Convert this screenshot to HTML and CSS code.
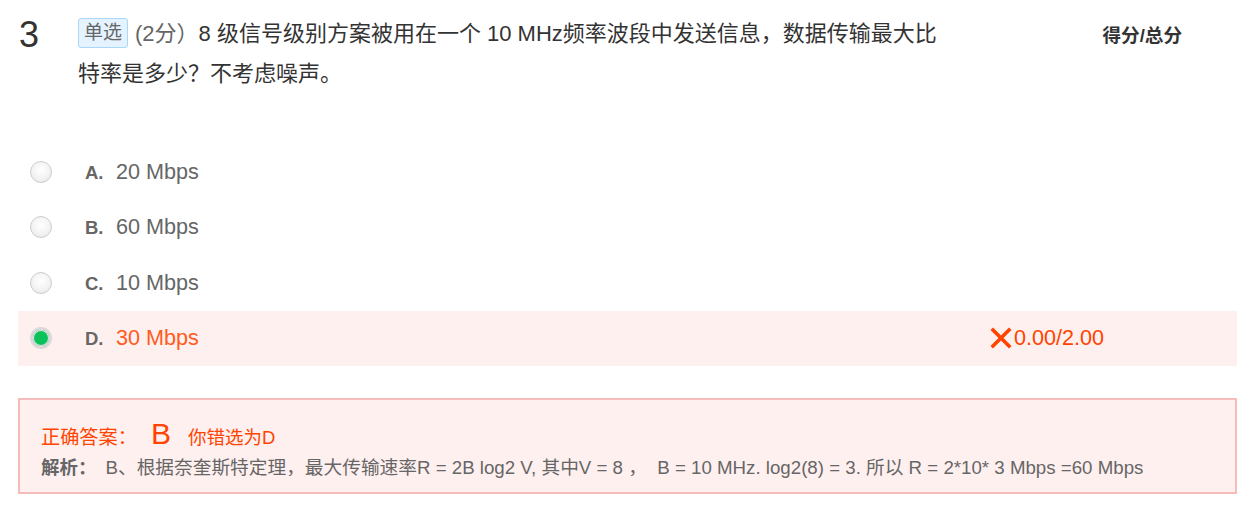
FILE: index.html
```html
<!DOCTYPE html>
<html lang="zh">
<head>
<meta charset="utf-8">
<link rel="stylesheet" href="styles.css">
</head>
<body>
<div class="question">
  <div class="q-head">
    <div class="q-num">3</div>
    <div class="q-text"><span class="tag">单选</span><span class="points">(2分）</span><span class="stem">8 级信号级别方案被用在一个 10 MHz频率波段中发送信息，数据传输最大比特率是多少？不考虑噪声。</span></div>
    <div class="q-score">得分/总分</div>
  </div>
  <ul class="options">
    <li class="opt"><span class="radio"></span><span class="label"><span class="letter">A.</span><span class="val">20 Mbps</span></span></li>
    <li class="opt"><span class="radio"></span><span class="label"><span class="letter">B.</span><span class="val">60 Mbps</span></span></li>
    <li class="opt"><span class="radio"></span><span class="label"><span class="letter">C.</span><span class="val">10 Mbps</span></span></li>
    <li class="opt opt-wrong"><span class="radio radio-on"></span><span class="label"><span class="letter">D.</span><span class="val">30 Mbps</span></span><span class="result"><svg class="cross" viewBox="0 0 22 22" width="22" height="22"><path d="M3 3 L19 19 M19 3 L3 19" stroke="#ff4400" stroke-width="3.6" stroke-linecap="square"/></svg>0.00/2.00</span></li>
  </ul>
  <div class="answer">
    <div class="ans-line"><span class="ans-label">正确答案：</span><span class="ans-key">B</span><span class="ans-wrong">你错选为D</span></div>
    <div class="analysis"><span class="an-label">解析：</span><span class="an-text">B、根据奈奎斯特定理，最大传输速率R = 2B log2 V, 其中V = 8 ，&nbsp; B = 10 MHz. log2(8) = 3. 所以 R = 2*10* 3 Mbps =60 Mbps</span></div>
  </div>
</div>
</body>
</html>
```
FILE: styles.css
```css
* { box-sizing: border-box; }
body {
  margin: 0;
  background: #fff;
  font-family: "Liberation Sans", Arial, "Noto Sans CJK SC", sans-serif;
  color: #333;
}
.question { padding: 0 19px 0 18px; }
.q-head {
  display: flex;
  align-items: flex-start;
  padding-left: 1px;
}
.q-num {
  width: 59px;
  font-size: 36px;
  line-height: 36px;
  padding-top: 17px;
  color: #333;
}
.q-text {
  width: 864px;
  font-size: 22px;
  line-height: 40px;
  padding-top: 14px;
  color: #333;
}
.tag {
  display: inline-block;
  height: 30px;
  line-height: 28px;
  padding: 0 5px;
  margin-right: 7px;
  font-size: 19px;
  color: #666;
  background: #e4f3ff;
  border: 1px solid #a8d8f8;
  border-radius: 3px;
  vertical-align: 2px;
}
.points { color: #666; }
.q-score {
  margin-left: auto;
  margin-right: 55px;
  padding-top: 20px;
  font-size: 18.6px;
  font-weight: bold;
  color: #333;
}
.options {
  list-style: none;
  margin: 50px 0 0 0;
  padding: 0;
}
.opt {
  display: flex;
  align-items: center;
  height: 55.5px;
  padding-left: 12px;
  color: #666;
}
.label {
  display: flex;
  align-items: baseline;
}
.radio {
  width: 22px;
  height: 22px;
  border-radius: 50%;
  border: 1px solid #cdcdcd;
  background: radial-gradient(circle at 50% 40%, #ffffff 0%, #f3f3f3 55%, #e2e2e2 100%);
  margin-right: 33px;
  flex: none;
}
.radio-on {
  border: 3px solid #d9d9d9;
  background: #0bc25a;
  box-shadow: inset 0 0 0 1px #e6e6e6;
}
.letter {
  font-weight: bold;
  font-size: 18.5px;
  width: 31px;
}
.val { font-size: 21.6px; }
.opt-wrong {
  background: #fff0f0;
}
.opt-wrong .val { color: #ff5b1c; }
.result {
  margin-left: auto;
  margin-right: 133px;
  color: #ff4400;
  font-size: 21.6px;
  display: flex;
  align-items: center;
}
.cross {
  margin-right: 2px;
  flex: none;
}
.answer {
  margin-top: 32px;
  height: 96px;
  border: 2px solid #f6bcbc;
  background: #fff0f0;
  padding: 18px 0 0 21px;
}
.ans-line {
  display: flex;
  align-items: baseline;
  color: #ff4400;
  line-height: 32px;
}
.ans-label { font-size: 19.2px; }
.ans-key { font-size: 30px; margin-left: 14px; margin-right: 17px; }
.ans-wrong { font-size: 18.5px; }
.analysis {
  margin-top: 1px;
  font-size: 18.7px;
  color: #666;
  line-height: 26px;
  white-space: nowrap;
}
.an-label {
  font-weight: bold;
  font-size: 18.5px;
  margin-right: 9px;
}
```
